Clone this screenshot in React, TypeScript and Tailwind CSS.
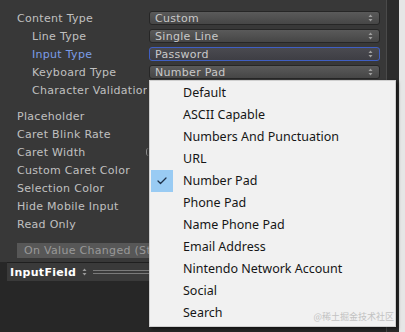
import React from 'react';
import { Check } from 'lucide-react';

const LABEL_FONT = { fontFamily: '"DejaVu Sans", Verdana, sans-serif' };
const MENU_FONT = { fontFamily: '"Noto Sans", "Open Sans", sans-serif' };

const menuItems = [
  'Default',
  'ASCII Capable',
  'Numbers And Punctuation',
  'URL',
  'Number Pad',
  'Phone Pad',
  'Name Phone Pad',
  'Email Address',
  'Nintendo Network Account',
  'Social',
  'Search',
];

function UpDown({ className = '' }: { className?: string }) {
  return (
    <svg width="5" height="8" viewBox="0 0 5 8" className={className}>
      <path d="M2.5 0.5 L4.5 3 L0.5 3 Z" fill="currentColor" />
      <path d="M2.5 7.5 L4.5 5 L0.5 5 Z" fill="currentColor" />
    </svg>
  );
}

function Dropdown({ value, active }: { value?: string; active?: boolean }) {
  return (
    <div
      className={`flex h-[14px] w-[231px] items-center justify-between rounded-[3px] border pl-[5px] pr-[6px] ${
        active
          ? 'border-[#3f5fc4] bg-gradient-to-b from-[#4a4a50] to-[#3e3e44]'
          : 'border-[#262626] bg-gradient-to-b from-[#5a5a5a] to-[#464646]'
      }`}
    >
      <span className="text-[11px] leading-none tracking-[0.3px] text-[#c9c9c9]">{value}</span>
      <UpDown className="text-[#a0a0a0]" />
    </div>
  );
}

function Row({
  label,
  indent,
  highlight,
  children,
}: {
  label: string;
  indent?: boolean;
  highlight?: boolean;
  children?: React.ReactNode;
}) {
  return (
    <div className="flex h-[18px] items-center">
      <div
        className={`w-[130px] shrink-0 overflow-hidden whitespace-nowrap text-[11px] leading-none tracking-[0.3px] ${
          indent ? 'pl-[15px]' : ''
        } ${highlight ? 'text-[#7b9de8]' : 'text-[#c0c0c0]'}`}
      >
        {label}
      </div>
      <div className="ml-[2px]">{children}</div>
    </div>
  );
}

export default function App() {
  return (
    <div className="relative flex h-[332px] w-[405px] overflow-hidden bg-[#383838]" style={LABEL_FONT}>
      {/* inspector column */}
      <div className="flex w-[386px] shrink-0 flex-col">
        <div className="flex flex-col pl-[17px] pt-[9px]">
          <Row label="Content Type">
            <Dropdown value="Custom" />
          </Row>
          <Row label="Line Type" indent>
            <Dropdown value="Single Line" />
          </Row>
          <Row label="Input Type" indent highlight>
            <Dropdown value="Password" active />
          </Row>
          <Row label="Keyboard Type" indent>
            <Dropdown value="Number Pad" />
          </Row>
          <Row label="Character Validation" indent>
            <Dropdown value="None" />
          </Row>

          <div className="mt-[8px] flex flex-col">
            <Row label="Placeholder" />
            <Row label="Caret Blink Rate" />
            <Row label="Caret Width">
              <div className="ml-[-3px] h-[8px] w-[3px] rounded-l-full border-l border-[#8a8a8a]" />
            </Row>
            <Row label="Custom Caret Color" />
            <Row label="Selection Color" />
            <Row label="Hide Mobile Input" />
            <Row label="Read Only" />
          </div>

          <div className="mt-[10px] flex h-[15px] w-[363px] items-center bg-[#575757] pl-[7px]">
            <span className="text-[11px] leading-none tracking-[0.3px] text-[#999999]">
              On Value Changed (String)
            </span>
          </div>
        </div>

        <div className="mt-[4px] flex flex-1 flex-col bg-[#272727]">
          <div className="ml-[7px] flex h-[19px] items-center border-t border-[#1f1f1f] bg-[#3a3a3a] pl-[3px]">
            <span className="text-[11px] font-bold leading-none tracking-[0.3px] text-white">InputField</span>
            <UpDown className="ml-[6px] text-[#9a9a9a]" />
            <div className="ml-[6px] flex flex-1 flex-col gap-[2px]">
              <div className="h-px bg-[#7a7a7a]" />
              <div className="h-px bg-[#7a7a7a]" />
            </div>
          </div>
        </div>
      </div>

      {/* right edge */}
      <div className="w-px bg-[#4a4a4a]" />
      <div className="w-[12px] bg-[#2c2c2c]" />
      <div className="flex-1 bg-[#e6e6e6]" />

      {/* popup menu */}
      <div
        className="absolute left-[149px] top-[80px] h-[247px] w-[247px] border border-[#cfcfcf] bg-[#f1f1f1] pt-[1px] shadow-[2px_2px_3px_rgba(0,0,0,0.5)]"
        style={MENU_FONT}
      >
        {menuItems.map((item) => (
          <div key={item} className="flex h-[22px] items-center">
            <div className="ml-[1px] flex h-[22px] w-[22px] items-center justify-center">
              {item === 'Number Pad' && (
                <div className="flex h-[22px] w-[22px] items-center justify-center bg-[#99cbf3]">
                  <Check size={12} strokeWidth={2.5} className="text-[#1d3048]" />
                </div>
              )}
            </div>
            <span className="ml-[10px] text-[12.5px] leading-none text-[#161616]">{item}</span>
          </div>
        ))}
        <span
          className="absolute bottom-[5px] right-[1px] text-[9px] leading-none text-[#c2c2c2]"
          style={{ fontFamily: '"Noto Sans CJK SC", "Noto Sans", sans-serif' }}
        >
          @稀土掘金技术社区
        </span>
      </div>
    </div>
  );
}
